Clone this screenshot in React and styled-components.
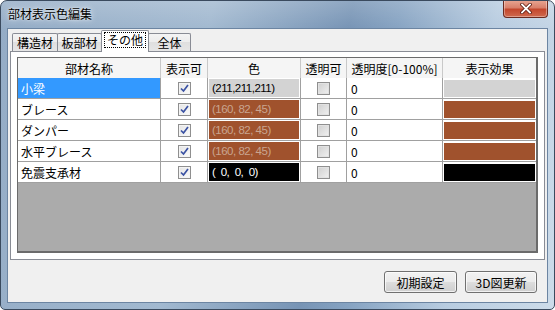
import React from "react";
import styled, { createGlobalStyle } from "styled-components";

const GlobalStyle = createGlobalStyle`
  body {
    margin: 0;
    background: #ffffff;
  }
  * {
    box-sizing: border-box;
  }
`;

const Window = styled.div`
  width: 555px;
  height: 310px;
  display: flex;
  flex-direction: column;
  border: 1px solid #3a4a5e;
  border-radius: 7px 7px 5px 5px;
  overflow: hidden;
  background:
    linear-gradient(to bottom, rgba(255, 255, 255, 0.18), rgba(255, 255, 255, 0) 28px),
    linear-gradient(100deg, #94acc6 0%, #a2b9d0 35%, #7794b5 58%, #86a3c2 66%, #b8cce0 82%, #cddcea 100%);
  font-family: "Noto Sans CJK JP", "Noto Sans", sans-serif;
  font-size: 12px;
  color: #000;
`;

const TitleBar = styled.div`
  height: 27px;
  display: flex;
  align-items: flex-start;
  justify-content: space-between;
  padding-left: 7px;
`;

const Title = styled.span`
  margin-top: 5px;
  font-size: 12px;
  line-height: 16px;
  color: #000;
  text-shadow: 0 0 6px rgba(255, 255, 255, 0.9), 0 0 2px rgba(255, 255, 255, 0.8);
`;

const CloseButton = styled.div`
  width: 45px;
  height: 18px;
  margin-right: 6px;
  margin-top: -1px;
  border: 1px solid #6b2a1f;
  border-top: none;
  border-radius: 0 0 4px 4px;
  background: linear-gradient(#e9a794 0%, #d9806b 45%, #c4472d 55%, #cf6a4e 100%);
  box-shadow: inset 0 0 0 1px rgba(255, 255, 255, 0.35);
  display: flex;
  align-items: center;
  justify-content: center;
`;

const Client = styled.div`
  flex: 1;
  margin: 0 6px 6px;
  border: 1px solid #6c85a2;
  background: #f0f0f0;
  display: flex;
  flex-direction: column;
  padding: 0 2px;
`;

const TabStrip = styled.div`
  height: 22px;
  display: flex;
  align-items: flex-end;
  padding-left: 2px;
`;

const Tab = styled.div`
  position: relative;
  z-index: ${({ $active }) => ($active ? 2 : 1)};
  width: ${({ $w }) => $w}px;
  height: ${({ $active }) => ($active ? 22 : 18)}px;
  margin-left: ${({ $first }) => ($first ? 0 : -1)}px;
  margin-bottom: ${({ $active }) => ($active ? -1 : 0)}px;
  border: 1px solid #898c95;
  border-bottom: none;
  border-radius: 2px 2px 0 0;
  background: ${({ $active }) =>
    $active ? "#ffffff" : "linear-gradient(#f4f4f4, #ececec 50%, #dfdfdf 50%, #e6e6e6)"};
  display: flex;
  align-items: center;
  justify-content: center;
  font-size: 12px;
  padding-bottom: ${({ $active }) => ($active ? 3 : 0)}px;
`;

const Focus = styled.span`
  border: 1px dotted #000;
  padding: 0 2px;
  line-height: 14px;
`;

const Panel = styled.div`
  position: relative;
  z-index: 1;
  height: 209px;
  border: 1px solid #898c95;
  background: #ffffff;
  padding: 5px 6px 6px;
`;

const GridView = styled.div`
  width: 521px;
  height: 196px;
  border: 1px solid #6b6b6b;
  border-right-width: 2px;
  border-bottom-width: 2px;
  background: #ababab;
  display: grid;
  grid-template-columns: 143px 47px 93px 46px 96px 93px;
  grid-template-rows: 20px;
  grid-auto-rows: 21px;
  align-content: start;
`;

const HeaderCell = styled.div`
  background: #f5f5f5;
  border-right: ${({ $last }) => ($last ? "none" : "1px solid #c9c9c9")};
  display: flex;
  align-items: center;
  justify-content: center;
  font-size: 12px;
`;

const Cell = styled.div`
  background: ${({ $selected }) => ($selected ? "#3399ff" : "#ffffff")};
  color: ${({ $selected }) => ($selected ? "#ffffff" : "#000000")};
  border-right: ${({ $last }) => ($last ? "none" : "1px solid #a0a0a0")};
  border-bottom: 1px solid #a0a0a0;
  display: flex;
  align-items: center;
  justify-content: ${({ $align }) => $align || "flex-start"};
  padding: ${({ $pad }) => $pad || "0 3px"};
  font-size: 12px;
  white-space: nowrap;
`;

const Swatch = styled.div`
  flex: 1;
  align-self: stretch;
  background: ${({ $bg }) => $bg};
  color: ${({ $fg }) => $fg};
  display: flex;
  align-items: center;
  padding-left: 3px;
  font-family: "Liberation Sans", Arial, sans-serif;
  font-size: 11.5px;
  letter-spacing: -0.5px;
  white-space: pre;
`;

const CheckBox = styled.div`
  width: 13px;
  height: 13px;
  border: 1px solid #8f8f8f;
  background: ${({ $checked }) =>
    $checked
      ? "linear-gradient(135deg, #e4e4e4, #fbfbfb)"
      : "linear-gradient(135deg, #cfcfcf, #f1f1f1)"};
  box-shadow: inset 0 0 0 1px ${({ $checked }) => ($checked ? "#f4f4f4" : "#e2e2e2")};
  display: flex;
  align-items: center;
  justify-content: center;
`;

const ButtonRow = styled.div`
  display: flex;
  justify-content: flex-end;
  gap: 8px;
  margin-top: 11px;
  padding-right: 8px;
`;

const Button = styled.div`
  width: ${({ $w }) => $w}px;
  height: 22px;
  border: 1px solid #707070;
  border-radius: 3px;
  background: linear-gradient(#f2f2f2, #ebebeb 50%, #dddddd 50%, #cfcfcf);
  box-shadow: inset 0 0 0 1px rgba(255, 255, 255, 0.7);
  display: flex;
  align-items: center;
  justify-content: center;
  font-size: 12px;
`;

const Check = () => (
  <svg width="9" height="9" viewBox="0 0 9 9">
    <path d="M1 4.5 L3.5 7 L8 1" fill="none" stroke="#3b52a3" strokeWidth="1.7" />
  </svg>
);

const CloseX = () => (
  <svg width="12" height="11" viewBox="0 0 12 11">
    <path d="M2 1.5 L10 9.5 M10 1.5 L2 9.5" stroke="#5a1a10" strokeWidth="3.4" strokeLinecap="square" />
    <path d="M2 1.5 L10 9.5 M10 1.5 L2 9.5" stroke="#ffffff" strokeWidth="1.8" strokeLinecap="square" />
  </svg>
);

const tabs = [
  { label: "構造材", w: 46 },
  { label: "板部材", w: 45 },
  { label: "その他", w: 48, active: true },
  { label: "全体", w: 43 },
];

const columns = ["部材名称", "表示可", "色", "透明可", "透明度[0-100%]", "表示効果"];

const SIENNA = "rgb(160, 82, 45)";

const rows = [
  { name: "小梁", color: "rgb(211, 211, 211)", label: "(211,211,211)", fg: "#000000", selected: true },
  { name: "ブレース", color: SIENNA, label: "(160, 82, 45)", fg: "#c9a590" },
  { name: "ダンパー", color: SIENNA, label: "(160, 82, 45)", fg: "#c9a590" },
  { name: "水平ブレース", color: SIENNA, label: "(160, 82, 45)", fg: "#c9a590" },
  { name: "免震支承材", color: "#000000", label: "(  0,  0,  0)", fg: "#ffffff" },
];

const App = () => {
  return (
    <>
      <GlobalStyle />
      <Window>
        <TitleBar>
          <Title>部材表示色編集</Title>
          <CloseButton>
            <CloseX />
          </CloseButton>
        </TitleBar>
        <Client>
          <TabStrip>
            {tabs.map((t, i) => (
              <Tab key={t.label} $w={t.w} $first={i === 0} $active={t.active}>
                {t.active ? <Focus>{t.label}</Focus> : t.label}
              </Tab>
            ))}
          </TabStrip>
          <Panel>
            <GridView>
              {columns.map((c, i) => (
                <HeaderCell key={c} $last={i === columns.length - 1}>
                  {c}
                </HeaderCell>
              ))}
              {rows.map((r) => (
                <React.Fragment key={r.name}>
                  <Cell $selected={r.selected}>{r.name}</Cell>
                  <Cell $align="center">
                    <CheckBox $checked>
                      <Check />
                    </CheckBox>
                  </Cell>
                  <Cell $pad="1px 1px">
                    <Swatch $bg={r.color} $fg={r.fg}>
                      {r.label}
                    </Swatch>
                  </Cell>
                  <Cell $align="center">
                    <CheckBox />
                  </Cell>
                  <Cell $pad="0 4px">0</Cell>
                  <Cell $last $pad="2px 1px 1px">
                    <Swatch $bg={r.color} />
                  </Cell>
                </React.Fragment>
              ))}
            </GridView>
          </Panel>
          <ButtonRow>
            <Button $w={73}>初期設定</Button>
            <Button $w={72}>3D図更新</Button>
          </ButtonRow>
        </Client>
      </Window>
    </>
  );
};

export default App;
